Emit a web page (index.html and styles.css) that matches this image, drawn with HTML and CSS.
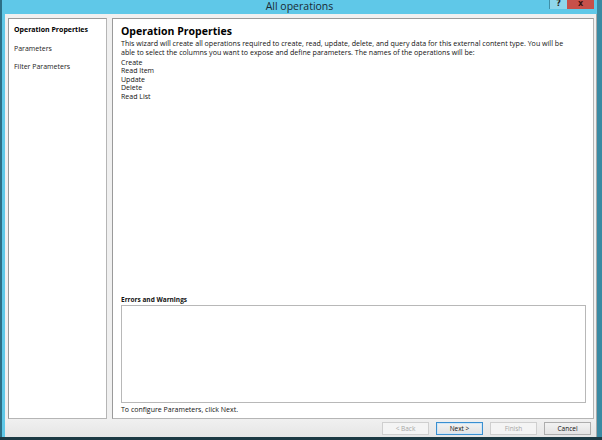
FILE: index.html
```html
<!DOCTYPE html>
<html lang="en">
<head>
<meta charset="UTF-8">
<title>All operations</title>
<link rel="stylesheet" href="styles.css">
</head>
<body>
<section class="window">
	<header class="titlebar">
		<span></span>
		<h1 class="caption">All operations</h1>
		<div class="controls">
			<a href="javascript:;" class="help">?</a>
			<a href="javascript:;" class="close">x</a>
		</div>
	</header>
	<div class="client">
		<div class="main">
			<ul class="steps">
				<li class="current">Operation Properties</li>
				<li>Parameters</li>
				<li>Filter Parameters</li>
			</ul>
			<div class="page">
				<h2 class="title">Operation Properties</h2>
				<p class="intro">This wizard will create all operations required to create, read, update, delete, and query data for this external content type. You will be able to select the columns you want to expose and define parameters. The names of the operations will be:</p>
				<ul class="ops">
					<li>Create</li>
					<li>Read Item</li>
					<li>Update</li>
					<li>Delete</li>
					<li>Read List</li>
				</ul>
				<h3 class="errTitle">Errors and Warnings</h3>
				<div class="errors"></div>
				<p class="note">To configure Parameters, click Next.</p>
			</div>
		</div>
		<footer class="buttons">
			<button type="button" disabled>&lt; Back</button>
			<button type="button" class="default">Next &gt;</button>
			<button type="button" disabled>Finish</button>
			<button type="button">Cancel</button>
		</footer>
	</div>
</section>
</body>
</html>
```
FILE: styles.css
```css
html,
body {
	margin: 0;
	padding: 0;
	background: #1d3a44;
}
h1, h2, h3, p {
	margin: 0;
}
ul {
	margin: 0;
	padding: 0;
	list-style: none;
}
.window {
	display: flex;
	flex-direction: column;
	width: 602px;
	height: 437px;
	box-sizing: border-box;
	background: #5fc8e8;
	border-left: 2px solid #2c6f86;
	border-right: 5px solid #3a8aa3;
	font: 7px "Open Sans", "Noto Sans", sans-serif;
	color: #111;
}
.titlebar {
	display: grid;
	grid-template-columns: 1fr auto 1fr;
	height: 14px;
}
.caption {
	font: 10.5px/12px "Open Sans", "Noto Sans", sans-serif;
	color: #1b2a33;
}
.controls {
	display: flex;
	justify-self: end;
	align-items: flex-start;
	margin-right: 3px;
}
.controls a {
	display: block;
	height: 9px;
	font: bold 8px/8px "DejaVu Sans", sans-serif;
	text-align: center;
	text-decoration: none;
	color: #222;
}
.help {
	width: 17px;
	background: #8fd6ec;
	border-left: 1px solid #3f8fa8;
}
.close {
	width: 27px;
	background: #c7504a;
	color: #3a1010 !important;
}
.client {
	display: flex;
	flex-direction: column;
	flex: 1;
	margin-left: 3px;
	background: #f0f0f0;
	border-right: 1px solid #a9a9a9;
}
.main {
	display: flex;
	flex: 1;
	gap: 5px;
	padding: 4px 2px 0 3px;
}
.steps {
	width: 92px;
	background: #fff;
	border: 1px solid #9a9a9a;
	border-right-color: #b5b5b5;
	border-bottom-color: #b5b5b5;
	padding: 6px 0 0 5px;
}
.steps li {
	height: 18.5px;
	font: 7px/9px "Open Sans", "Noto Sans", sans-serif;
	color: #222;
}
.steps li.current {
	font-weight: bold;
	color: #000;
}
.page {
	display: flex;
	flex-direction: column;
	flex: 1;
	background: #fff;
	border: 1px solid #9a9a9a;
	border-right-color: #b5b5b5;
	border-bottom-color: #b5b5b5;
	padding: 6px 7px 4px 8px;
}
.title {
	font: bold 10.5px/13px "Open Sans", "Noto Sans", sans-serif;
	color: #000;
}
.intro {
	margin-top: 1px;
	max-width: 455px;
	font: 7.1px/9px "Open Sans", "Noto Sans", sans-serif;
}
.ops {
	margin-top: 1.5px;
	flex: 1;
}
.ops li {
	font: 7px/8.6px "Open Sans", "Noto Sans", sans-serif;
}
.errTitle {
	font: bold 6.5px/9px "Open Sans", "Noto Sans", sans-serif;
	margin-bottom: 1px;
}
.errors {
	height: 96px;
	border: 1px solid #b8b8b8;
	background: #fff;
}
.note {
	margin-top: 2px;
	font: 7px/9px "Open Sans", "Noto Sans", sans-serif;
}
.buttons {
	display: flex;
	justify-content: flex-end;
	gap: 7px;
	height: 18px;
	padding: 3px 5px 0 0;
	box-sizing: border-box;
	background: linear-gradient(#f0f0f0, #e6e6e6);
}
.buttons button {
	width: 47px;
	height: 13px;
	padding: 0;
	border: 1px solid #adadad;
	background: linear-gradient(#f2f2f2, #e3e3e3);
	font: 6.5px/11px "Open Sans", "Noto Sans", sans-serif;
	color: #111;
}
.buttons button.default {
	border-color: #3a8fd0;
	box-shadow: inset 0 0 0 1px #cfe6f7;
}
.buttons button:disabled {
	border-color: #cfcfcf;
	background: #f4f4f4;
	color: #a6a6a6;
}
```
